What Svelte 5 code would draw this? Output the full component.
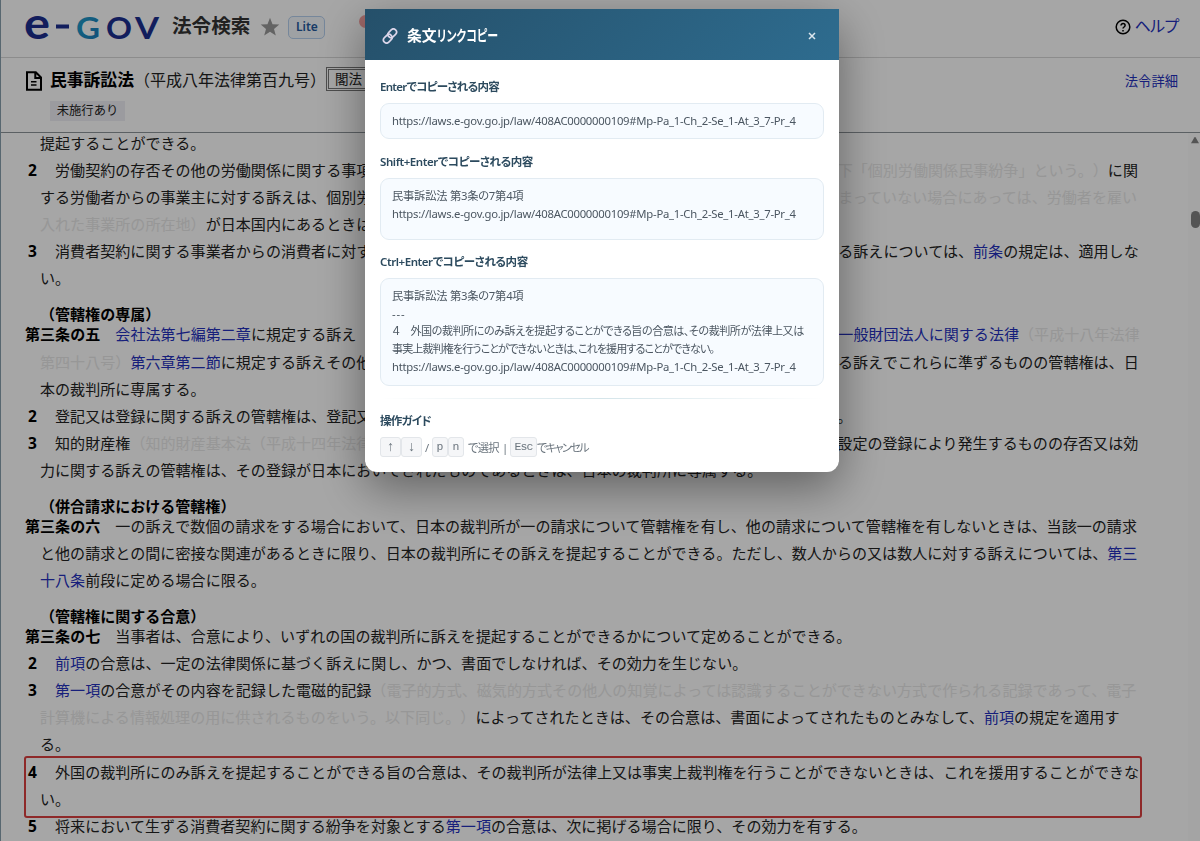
<script lang="ts">
	type Part = string | { link: string } | { faded: string };
	type Paragraph = { num?: string; article?: string; selected?: boolean; parts: Part[] };
	type Section = { caption?: string; paragraphs: Paragraph[] };

	const url = "https://laws.e-gov.go.jp/law/408AC0000000109#Mp-Pa_1-Ch_2-Se_1-At_3_7-Pr_4";
	const heading = "民事訴訟法 第3条の7第4項";

	const sections: Section[] = [
		{
			paragraphs: [
				{ parts: ["　提起することができる。"] },
				{ num: "2", parts: [
					"労働契約の存否その他の労働関係に関する事項について個々の労働者と事業主との間に生じた民事に関する紛争",
					{ faded: "（以下「個別労働関係民事紛争」という。）" },
					"に関する労働者からの事業主に対する訴えは、個別労働関係民事紛争に係る労働契約における労務の提供の地",
					{ faded: "（その地が定まっていない場合にあっては、労働者を雇い入れた事業所の所在地）" },
					"が日本国内にあるときは、日本の裁判所に提起することができる。",
				] },
				{ num: "3", parts: [
					"消費者契約に関する事業者からの消費者に対する訴え及び個別労働関係民事紛争に関する事業主からの労働者に対する訴えについては、",
					{ link: "前条" },
					"の規定は、適用しない。",
				] },
			],
		},
		{
			caption: "（管轄権の専属）",
			paragraphs: [
				{ article: "第三条の五", parts: [
					{ link: "会社法第七編第二章" },
					"に規定する訴え",
					{ faded: "（同章第四節及び第六節に規定するものを除く。）" },
					"、",
					{ link: "一般社団法人及び一般財団法人に関する法律" },
					{ faded: "（平成十八年法律第四十八号）" },
					{ link: "第六章第二節" },
					"に規定する訴えその他これらの法令以外の日本の法令により設立された社団又は財団に関する訴えでこれらに準ずるものの管轄権は、日本の裁判所に専属する。",
				] },
				{ num: "2", parts: ["登記又は登録に関する訴えの管轄権は、登記又は登録をすべき地が日本国内にあるときは、日本の裁判所に専属する。"] },
				{ num: "3", parts: [
					"知的財産権",
					{ faded: "（知的財産基本法（平成十四年法律第百二十二号）第二条第二項に規定する知的財産権をいう。）" },
					"のうち設定の登録により発生するものの存否又は効力に関する訴えの管轄権は、その登録が日本においてされたものであるときは、日本の裁判所に専属する。",
				] },
			],
		},
		{
			caption: "（併合請求における管轄権）",
			paragraphs: [
				{ article: "第三条の六", parts: [
					"一の訴えで数個の請求をする場合において、日本の裁判所が一の請求について管轄権を有し、他の請求について管轄権を有しないときは、当該一の請求と他の請求との間に密接な関連があるときに限り、日本の裁判所にその訴えを提起することができる。ただし、数人からの又は数人に対する訴えについては、",
					{ link: "第三十八条" },
					"前段に定める場合に限る。",
				] },
			],
		},
		{
			caption: "（管轄権に関する合意）",
			paragraphs: [
				{ article: "第三条の七", parts: ["当事者は、合意により、いずれの国の裁判所に訴えを提起することができるかについて定めることができる。"] },
				{ num: "2", parts: [{ link: "前項" }, "の合意は、一定の法律関係に基づく訴えに関し、かつ、書面でしなければ、その効力を生じない。"] },
				{ num: "3", parts: [
					{ link: "第一項" },
					"の合意がその内容を記録した電磁的記録",
					{ faded: "（電子的方式、磁気的方式その他人の知覚によっては認識することができない方式で作られる記録であって、電子計算機による情報処理の用に供されるものをいう。以下同じ。）" },
					"によってされたときは、その合意は、書面によってされたものとみなして、",
					{ link: "前項" },
					"の規定を適用する。",
				] },
				{ num: "4", selected: true, parts: ["外国の裁判所にのみ訴えを提起することができる旨の合意は、その裁判所が法律上又は事実上裁判権を行うことができないときは、これを援用することができない。"] },
				{ num: "5", parts: ["将来において生ずる消費者契約に関する紛争を対象とする", { link: "第一項" }, "の合意は、次に掲げる場合に限り、その効力を有する。"] },
			],
		},
	];
</script>

<div class="page">
	<header class="site-header">
		<svg class="logo" width="136" height="28" viewBox="0 0 136 28" role="img" aria-label="e-GOV">
			<defs>
				<linearGradient id="logo-g" x1="0" y1="0" x2="1" y2="1">
					<stop offset="0" stop-color="#20a5cc" />
					<stop offset="1" stop-color="#1b75b8" />
				</linearGradient>
			</defs>
			<text x="-1" y="25.5" font-size="43" textLength="26" lengthAdjust="spacingAndGlyphs">e</text>
			<rect x="31" y="11.5" width="13" height="4" />
			<text x="51" y="25.5" font-size="31" textLength="24" lengthAdjust="spacingAndGlyphs" fill="url(#logo-g)">G</text>
			<text x="81" y="25.5" font-size="31" textLength="26" lengthAdjust="spacingAndGlyphs">O</text>
			<text x="110" y="25.5" font-size="31" textLength="24" lengthAdjust="spacingAndGlyphs">V</text>
		</svg>
		<h1>法令検索</h1>
		<svg class="star" width="20" height="20" viewBox="0 0 20 20">
			<path d="M10 .8l2.5 6.4 6.8.4-5.3 4.3 1.8 6.7-5.8-3.8-5.8 3.8L6 11.9.7 7.6l6.8-.4z" />
		</svg>
		<span class="lite">Lite</span>
		<i class="notice"></i>
		<a class="help" href="#help">
			<svg width="16" height="16" viewBox="0 0 16 16">
				<circle cx="8" cy="8" r="6.8" />
				<path d="M6 6.5c0-2.6 4.1-2.5 4.1 0 0 1.5-2.1 1.5-2.1 3.1M8 11v1.4" />
			</svg>
			<span>ヘルプ</span>
		</a>
	</header>

	<div class="law-header">
		<svg class="doc" width="18" height="20" viewBox="0 0 18 20">
			<path d="M2 1.3h8.8L16 6.5v12.2H2zM10.3 1.5V7H16" />
			<path class="lines" d="M6 10.8h5.5M6 14h5.5" />
		</svg>
		<div class="law-name">
			<div class="law-title"><b>民事訴訟法</b><span>（平成八年法律第百九号）</span><em>閣法</em></div>
			<span class="pending">未施行あり</span>
		</div>
		<a class="detail" href="#detail">法令詳細</a>
	</div>

	<div class="law-body">
		<main>
			{#each sections as section}
				{#if section.caption}<h2>{section.caption}</h2>{/if}
				{#each section.paragraphs as p}
					<p class:selected={p.selected}>{#if p.num}<b class="num">{p.num}</b>　{/if}{#if p.article}<b>{p.article}</b>　{/if}{#each p.parts as part}{#if typeof part === "string"}{part}{:else if "link" in part}<a href="#ref">{part.link}</a>{:else}<span class="faded">{part.faded}</span>{/if}{/each}</p>
				{/each}
			{/each}
		</main>
		<div class="scrollbar">
			<svg width="10" height="8" viewBox="0 0 10 8"><path d="M1 7.3 4.3 1.4q.7-1 1.4 0L9 7.3z" /></svg>
			<i></i>
		</div>
	</div>
</div>

<div class="overlay">
	<div class="modal" role="dialog" aria-label="条文リンクコピー">
		<div class="modal-header">
			<svg class="chain" width="16" height="16" viewBox="0 0 16 16">
				<rect x="5.4" y="2.2" width="9.6" height="6.2" rx="3.1" transform="rotate(-45 10.2 5.3)" />
				<rect x="1" y="7.6" width="9.6" height="6.2" rx="3.1" transform="rotate(-45 5.8 10.7)" />
			</svg>
			<h3>条文<span>リンクコピー</span></h3>
			<button aria-label="閉じる">
				<svg width="8" height="8" viewBox="0 0 8 8"><path d="M1 1l6 6M7 1 1 7" /></svg>
			</button>
		</div>
		<div class="modal-body">
			<h4 class="enter">Enterでコピーされる内容</h4>
			<div class="preview"><div class="url">{url}</div></div>

			<h4>Shift+Enterでコピーされる内容</h4>
			<div class="preview tall">
				<div class="heading">{heading}</div>
				<div class="url">{url}</div>
			</div>

			<h4>Ctrl+Enterでコピーされる内容</h4>
			<div class="preview full">
				<div class="heading">{heading}</div>
				<div class="rule">---</div>
				<div class="quote">４　外国の裁判所にのみ訴えを提起することができる旨の合意は、その裁判所が法律上又は</div>
				<div class="quote narrow">事実上裁判権を行うことができないときは、これを援用することができない。</div>
				<div class="url">{url}</div>
			</div>

			<hr />
			<h4 class="guide-title">操作ガイド</h4>
			<div class="guide">
				<kbd class="arrow">↑</kbd><kbd class="arrow">↓</kbd><span class="slash">/</span><kbd>p</kbd><kbd>n</kbd><span class="select">で選択</span><span class="bar">|</span><kbd class="esc">Esc</kbd><span class="cancel">でキャンセル</span>
			</div>
		</div>
	</div>
</div>

<style>
:global(body) {
	margin: 0;
	overflow: hidden;
	background: #fff;
}

.page {
	display: flex;
	flex-direction: column;
	box-sizing: border-box;
	width: 1200px;
	height: 841px;
	border-left: 1px solid #879fad;
	font-family: "Noto Sans CJK JP", sans-serif;
	color: #222;
	text-spacing-trim: space-all;
}

a {
	color: #2430bd;
	text-decoration: none;
}

.site-header {
	display: flex;
	align-items: center;
	box-sizing: border-box;
	height: 58px;
	padding: 0 22px 4px 24px;
	border-bottom: 1px solid #d8d8d8;
}

.logo {
	overflow: visible;
	font-family: Lato, sans-serif;
	font-weight: 700;
	fill: #1c2f8f;
}

h1 {
	margin: -3px 0 0 11px;
	font-size: 19.6px;
	line-height: 28px;
	font-weight: 700;
	color: #333;
}

.star {
	margin-left: 10px;
	fill: #999;
}

.lite {
	box-sizing: border-box;
	width: 37px;
	height: 23px;
	margin: 2px 0 0 8px;
	border: 1px solid #b5cfee;
	border-radius: 5px;
	background: #f3f7fc;
	font: 600 12px/19px "Noto Sans", sans-serif;
	text-align: center;
	color: #245a9e;
}

.notice {
	width: 13px;
	height: 13px;
	margin: -11px 0 0 34px;
	border-radius: 50%;
	background: #f4a0a0;
}

.help {
	display: flex;
	align-items: center;
	gap: 4px;
	margin-left: auto;
	font-size: 16px;
	letter-spacing: -1.6px;
}

.help span {
	margin-top: -3px;
}

.help svg {
	fill: none;
	stroke: #000;
	stroke-width: 1.5;
}

.law-header {
	display: flex;
	box-sizing: border-box;
	height: 75px;
	padding: 9px 22px 0 24px;
	border-bottom: 1px solid #8d9499;
}

.doc {
	margin-top: 4px;
	fill: none;
	stroke: #000;
	stroke-width: 2;
}

.doc .lines {
	stroke-width: 1.4;
}

.law-name {
	margin-left: 7px;
}

.law-title {
	display: flex;
	align-items: center;
	height: 24px;
	font-size: 16px;
}

.law-title b {
	font-size: 16.8px;
	color: #000;
}

.law-title em {
	box-sizing: border-box;
	height: 24px;
	padding: 0 6px;
	border: 3px double #777;
	font-size: 13.5px;
	line-height: 17px;
	font-style: normal;
}

.pending {
	display: block;
	width: 75px;
	height: 20px;
	margin-top: 10px;
	background: #eeeff5;
	font-size: 12.3px;
	line-height: 18px;
	text-align: center;
}

.detail {
	margin: 4px 0 0 auto;
	font-size: 13.3px;
	line-height: 20px;
}

.law-body {
	display: flex;
	flex: 1;
	min-height: 0;
	overflow: hidden;
}

main {
	flex: 1;
	margin-top: -4px;
	padding: 0 47px 0 39px;
}

p {
	margin: 0 0 0 -1px;
	padding: 0 0 0 1px;
	font-size: 15.04px;
	line-height: 27.07px;
	letter-spacing: .03px;
	text-indent: -15.04px;
	line-break: strict;
}

p b,
h2 {
	color: #000;
}

p b {
	line-height: 15px;
}

.num {
	display: inline-block;
	width: 15.04px;
	font-family: "Noto Sans", sans-serif;
	font-size: 15.5px;
	text-indent: 0;
	text-align: center;
}

.faded {
	color: #e8e8e8;
}

h2 {
	margin: 16.1px 0 0;
	font-size: 15.04px;
	line-height: 13px;
	font-weight: 700;
}

.selected {
	margin: 0 1px -4px -14px;
	padding: 0 0 4px 14px;
	border-radius: 1px;
	outline: 2px solid #db4040;
}

.scrollbar {
	display: flex;
	flex-direction: column;
	align-items: flex-end;
	width: 12px;
	padding-top: 3px;
	background: #fcfcfc;
	fill: #828282;
}

.scrollbar i {
	width: 9px;
	height: 17px;
	margin-top: 67px;
	border-radius: 5px;
	background: #828282;
}

.overlay {
	position: fixed;
	inset: 0;
	display: flex;
	align-items: flex-start;
	padding: 9px 0 0 365px;
	background: rgba(0, 0, 0, .35);
}

.modal {
	box-sizing: border-box;
	width: 474px;
	height: 463px;
	border-radius: 0 0 12px 12px;
	background: #fff;
	box-shadow: 0 16px 48px rgba(0, 0, 0, .42);
	font-family: "Noto Sans", "Noto Sans CJK JP", sans-serif;
	color: #4b5661;
	overflow: hidden;
}

.modal-header {
	display: flex;
	align-items: center;
	box-sizing: border-box;
	height: 51px;
	padding: 0 23px 0 17px;
	background: linear-gradient(135deg, #25506a, #2e6c8f);
}

.chain {
	margin-top: 2px;
	fill: none;
	stroke: #dcd6ea;
	stroke-width: 1.7;
}

h3 {
	display: flex;
	margin: 0 0 0 9px;
	font-size: 14.8px;
	font-weight: 600;
	font-feature-settings: "palt";
	color: #fff;
}

h3 span {
	transform: scaleX(.74);
	transform-origin: left;
}

button {
	display: flex;
	margin: 3px 0 0 auto;
	padding: 0;
	border: 0;
	background: none;
}

button svg {
	fill: none;
	stroke: #dbe6ee;
	stroke-width: 1.5;
}

.modal-body {
	padding: 18px 15px 0;
}

h4 {
	margin: 0 0 7px;
	font-size: 11.5px;
	line-height: 18px;
	font-weight: 600;
	letter-spacing: -.43px;
	font-feature-settings: "palt";
	color: #2c4a5e;
	white-space: nowrap;
}

.enter {
	letter-spacing: -.72px;
}

.guide-title {
	letter-spacing: -.7px;
}

.preview {
	box-sizing: border-box;
	width: 444px;
	height: 36px;
	margin-bottom: 14px;
	padding: 8px 11px 0;
	border: 1px solid #e2ebf2;
	border-radius: 9px;
	background: #f7fbff;
	font-size: 11.3px;
	line-height: 17.7px;
	white-space: nowrap;
}

.preview.tall {
	height: 62px;
	margin-bottom: 13px;
}

.preview.full {
	height: 108px;
}

.url {
	letter-spacing: -.26px;
}

.rule {
	letter-spacing: .8px;
}

.heading,
.quote {
	font-feature-settings: "palt";
}

.heading {
	letter-spacing: -.25px;
}

.quote {
	font-size: 11.1px;
	letter-spacing: -.5px;
}

.narrow {
	letter-spacing: -.94px;
}

hr {
	height: 1px;
	margin: -2px 0 13px;
	border: 0;
	background: linear-gradient(90deg, transparent, #d5e5ea, transparent);
}

.guide {
	display: flex;
	align-items: center;
	height: 20px;
	font-size: 11.3px;
	font-feature-settings: "palt";
	color: #6b757e;
	white-space: nowrap;
}

kbd {
	box-sizing: border-box;
	width: 16px;
	height: 20px;
	border: 1px solid #e3e6ea;
	border-radius: 3px;
	background: #f5f6f8;
	font: 11.5px/18px "Liberation Mono", monospace;
	text-align: center;
}

.arrow {
	width: 21px;
	font-size: 14px;
}

.esc {
	width: 27px;
	letter-spacing: -.9px;
}

.slash {
	width: 10px;
	text-align: center;
}

.select {
	width: 38px;
	padding-left: 4px;
	letter-spacing: -.8px;
	box-sizing: border-box;
}

.bar {
	width: 8px;
}

.cancel {
	letter-spacing: -1.8px;
}
</style>
